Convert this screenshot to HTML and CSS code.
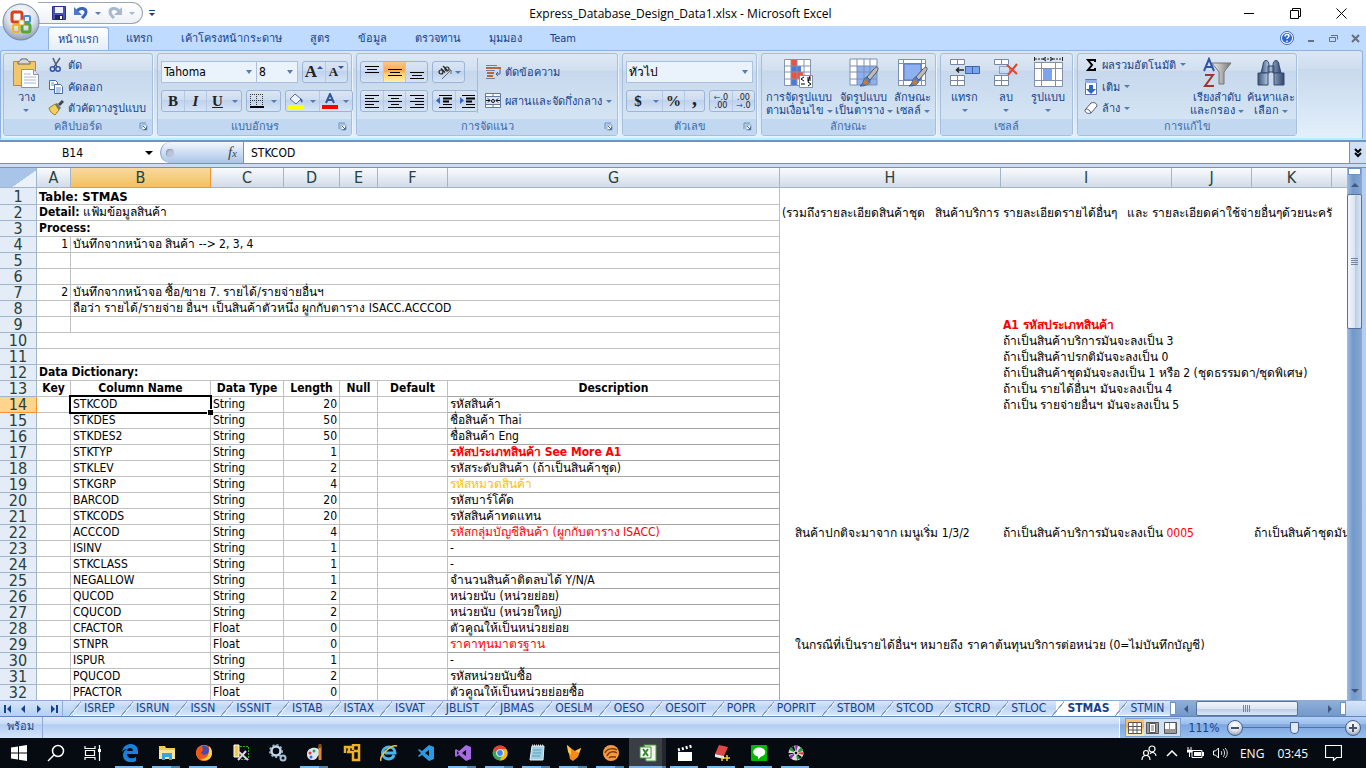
FILE: index.html
```html
<!DOCTYPE html>
<html lang="th">
<head>
    <meta charset="UTF-8">
    <meta name="viewport" content="width=device-width, initial-scale=1.0">
    <title>Express_Database_Design_Data1.xlsx - Microsoft Excel</title>
    <link rel="stylesheet" href="styles.css">
</head>
<body>
    <!-- shared icons -->
    <svg class="defs" width="0" height="0" aria-hidden="true">
        <defs>
            <linearGradient id="steel" x1="0" x2="1"><stop offset="0" stop-color="#3d5478"/><stop offset=".4" stop-color="#b9cce6"/><stop offset="1" stop-color="#2f4569"/></linearGradient>
            <linearGradient id="funnel" x1="0" x2="1"><stop offset="0" stop-color="#eee"/><stop offset="1" stop-color="#777"/></linearGradient>
            <radialGradient id="orb" cx=".5" cy=".3" r=".7"><stop offset="0" stop-color="#fff"/><stop offset=".55" stop-color="#dfe4ec"/><stop offset="1" stop-color="#8e9db5"/></radialGradient>
            <symbol id="launcher" viewBox="0 0 9 9"><path d="M1 7V1h6" fill="none" stroke="#6a8cb8"/><path d="M3 3h5v5H3z" fill="#fff" stroke="#8aa6cb"/><path d="M4 4l3 3M7.500 4.500v3h-3" stroke="#4a6da0" fill="none"/></symbol>
            <symbol id="grid-table" viewBox="0 0 30 30">
                <path d="M1 1h27v26H1z" fill="#fff"/><path d="M8 8h20v19H8z" fill="#8db0f0"/>
                <path d="M1 1h27v26H1zM8 1v26M15 1v26M21 1v26M1 8h27M1 14h27M1 21h27" fill="none" stroke="#7d8fb0"/>
            </symbol>
            <symbol id="brush" viewBox="0 0 20 22">
                <path d="M18 1c2 1 1 3-1 6l-6 7-3-3 6-7c2-2 3-3 4-3z" fill="#bbb" stroke="#555"/>
                <path d="M8 11l3 3c0 4-4 6-10 6 4-2 3-8 7-9z" fill="#5980c4" stroke="#3b5c96"/><path d="M6 13l4 4-3 2-3-2z" fill="#c77b33"/>
            </symbol>
        </defs>
    </svg>

    <header class="title-bar">
        <button class="office-button" aria-label="Office">
            <svg width="38" height="38" viewBox="0 0 38 38">
                <circle cx="19" cy="19" r="18" fill="url(#orb)" stroke="#7287a8"/>
                <rect x="10" y="9" width="10" height="10" rx="2" fill="none" stroke="#d8411b" stroke-width="3"/>
                <rect x="22" y="13" width="6" height="6" rx="1" fill="none" stroke="#3b8ede" stroke-width="2"/>
                <rect x="11" y="22" width="6" height="7" rx="1" fill="none" stroke="#f2b61c" stroke-width="2"/>
                <rect x="20" y="21" width="8" height="8" rx="2" fill="none" stroke="#57a639" stroke-width="3"/>
                <path d="M17 17h5v5h-5z" fill="#fff" stroke="#e8a02a"/>
            </svg>
        </button>
        <div class="quick-access">
            <button aria-label="Save"><svg width="16" height="16" viewBox="0 0 16 16"><path d="M1.500 1.500h13v13h-13z" fill="#4a52b8" stroke="#2b2f86"/><path d="M4 2h8v6H4z" fill="#eef2ff"/><path d="M4 10h8v5H4z" fill="#20245f"/><path d="M9 11h2v3H9z" fill="#fff"/></svg></button>
            <button aria-label="Undo"><svg width="16" height="16" viewBox="0 0 16 16"><path d="M4 6c3-4 9-3 9 1 0 3-2 4-4 6" fill="none" stroke="#3a63b8" stroke-width="3"/><path d="M1 2v8h8z" fill="#4c78cc"/></svg></button>
            <i class="arrow"></i>
            <button aria-label="Redo"><svg width="16" height="16" viewBox="0 0 16 16"><path d="M12 6C9 2 3 3 3 7c0 3 2 4 4 6" fill="none" stroke="#a9b8cf" stroke-width="3"/><path d="M15 2v8H7z" fill="#a9b8cf"/></svg></button>
            <i class="arrow muted"></i>
        </div>
        <button class="customize" aria-label="Customize"><i class="bar"></i><i class="arrow dark"></i></button>
        <h1>Express_Database_Design_Data1.xlsx - Microsoft Excel</h1>
        <div class="window-buttons">
            <button aria-label="Minimize"><svg width="11" height="11"><path d="M0 5.500h10" stroke="#000"/></svg></button>
            <button aria-label="Restore"><svg width="11" height="11"><path d="M.5 2.500h8v8h-8zM2.500 2.500v-2h8v8h-2" fill="none" stroke="#000"/></svg></button>
            <button aria-label="Close"><svg width="11" height="11"><path d="M.5.5l10 10M10.500.5l-10 10" stroke="#000"/></svg></button>
        </div>
    </header>

    <nav class="ribbon-tabs">
        <button class="active">หน้าแรก</button>
        <button>แทรก</button>
        <button>เค้าโครงหน้ากระดาษ</button>
        <button>สูตร</button>
        <button>ข้อมูล</button>
        <button>ตรวจทาน</button>
        <button>มุมมอง</button>
        <button>Team</button>
        <div class="book-buttons">
            <button aria-label="Help"><svg width="14" height="14" viewBox="0 0 14 14"><circle cx="7" cy="7" r="6.500" fill="#fff" stroke="#3464c0"/><circle cx="7" cy="7" r="5" fill="#2f66d0"/><path d="M5 5.500c0-3 4-2.500 4-.5 0 1.500-2 1.500-2 3M7 9.500V11" fill="none" stroke="#fff" stroke-width="1.500"/></svg></button>
            <button aria-label="Minimize workbook"><svg width="9" height="9"><path d="M1 7h6" stroke="#66707e" stroke-width="2"/></svg></button>
            <button aria-label="Restore workbook"><svg width="9" height="9"><path d="M.5 3.500h6v4h-6zM2 1.500h6.500v4" fill="none" stroke="#66707e"/></svg></button>
            <button aria-label="Close workbook"><svg width="9" height="9"><path d="M1 1l7 7M8 1L1 8" stroke="#66707e" stroke-width="2"/></svg></button>
        </div>
    </nav>

    <section class="ribbon">
        <div class="group clipboard">
            <div class="group-body">
                <button class="big">
                    <svg width="28" height="30" viewBox="0 0 28 30"><path d="M1.500 3.500h22v24h-22z" fill="#f3c66b" stroke="#b58a3a"/><path d="M6 4c1-1 3-1 3-3h6c0 2 2 2 3 3v2H6z" fill="#d7d7d7" stroke="#666"/><path d="M9.500 11.500h12l5 5v13h-17z" fill="#fff" stroke="#8a93a8"/><path d="M21.500 11.500v5h5" fill="#dde4f2" stroke="#8a93a8"/><path d="M12 16h7M12 19h12M12 22h12M12 25h12" stroke="#a8b8d8"/></svg>
                    <span>วาง</span><i class="arrow"></i>
                </button>
                <div class="stack">
                    <button class="line"><svg width="16" height="16" viewBox="0 0 16 16"><path d="M5 1l4 9M12 1L6 10" stroke="#555e70" stroke-width="1.500"/><circle cx="4.500" cy="12" r="2.200" fill="none" stroke="#2f55a4" stroke-width="1.500"/><circle cx="10" cy="12" r="2.200" fill="none" stroke="#2f55a4" stroke-width="1.500"/></svg>ตัด</button>
                    <button class="line"><svg width="16" height="16" viewBox="0 0 16 16"><path d="M1.500 1.500h6l2 2v7h-8z" fill="#fff" stroke="#4769ad"/><path d="M6.500 5.500h6l2 2v7h-8z" fill="#fff" stroke="#4769ad"/><path d="M3 4h3M3 6h3M8 9h5M8 11h5M8 13h4" stroke="#6f91d0"/></svg>คัดลอก</button>
                    <button class="line"><svg width="16" height="16" viewBox="0 0 16 16"><path d="M1 8l6-4 4 6-4 5c-2-1-5-3-6-7z" fill="#f2d25c" stroke="#9c7d22"/><path d="M7 4l2-1 4 5-2 2z" fill="#777"/><path d="M11 5l4-4" stroke="#444" stroke-width="3"/></svg>ตัวคัดวางรูปแบบ</button>
                </div>
            </div>
            <div class="group-label">คลิปบอร์ด<svg class="launcher" width="9" height="9"><use href="#launcher"/></svg></div>
        </div>

        <div class="group font">
            <div class="group-body rows">
                <div class="row">
                    <span class="combo family"><select aria-label="Font"><option>Tahoma</option></select></span><span class="combo size"><select aria-label="Font size"><option>8</option></select></span>
                    <span class="box push">
                        <button class="w22" aria-label="Grow font"><span class="serif big-a">A</span><i class="tip up"></i></button>
                        <button class="w22" aria-label="Shrink font"><span class="serif small-a">A</span><i class="tip"></i></button>
                    </span>
                </div>
                <div class="row spread">
                    <span class="box"><button class="w22 serif"><b>B</b></button><button class="w22 serif"><b><i>I</i></b></button><button class="w22 serif"><b><u>U</u></b></button><button class="drop" aria-label="Underline style"><i class="arrow"></i></button></span>
                    <span class="box"><button class="w20" aria-label="Borders"><svg width="14" height="14"><path d="M.5 0v12M6.500 0v12M12.500 0v12M0 .5h13M0 6.500h13" stroke="#333" stroke-dasharray="1 1"/><path d="M0 13h14" stroke="#000" stroke-width="2"/></svg></button><button class="drop" aria-label="Border style"><i class="arrow"></i></button></span>
                    <span class="box">
                        <button class="w20" aria-label="Fill color"><svg width="16" height="16"><path d="M2 6l5-5 6 5-5 5z" fill="#eef2fa" stroke="#5a6c90"/><path d="M12 5c3 1 3 3 2 5l-2-3z" fill="#3b62ad"/><path d="M0 12h16v4H0z" fill="#ff0"/></svg></button><button class="drop" aria-label="Fill colors"><i class="arrow"></i></button>
                        <button class="w20" aria-label="Font color"><svg width="16" height="16"><path d="M4 10L8 1l4 9M5 7h6" fill="none" stroke="#33539b" stroke-width="2"/><path d="M0 12h16v4H0z" fill="#f00"/></svg></button><button class="drop" aria-label="Font colors"><i class="arrow"></i></button>
                    </span>
                </div>
            </div>
            <div class="group-label">แบบอักษร<svg class="launcher" width="9" height="9"><use href="#launcher"/></svg></div>
        </div>

        <div class="group align">
            <div class="group-body">
                <div class="rows divided">
                    <div class="row">
                        <span class="box">
                            <button class="w22" aria-label="Top"><svg width="14" height="14"><path d="M0 1.500h14M2 4.500h10M0 7.500h14" stroke="#000"/></svg></button>
                            <button class="w22 on" aria-label="Middle"><svg width="14" height="14"><path d="M0 4.500h14M2 7.500h10M0 10.500h14" stroke="#000"/></svg></button>
                            <button class="w22" aria-label="Bottom"><svg width="14" height="14"><path d="M0 7.500h14M2 10.500h10M0 13.500h14" stroke="#000"/></svg></button>
                        </span>
                        <span class="box"><button class="orient" aria-label="Orientation"><svg width="16" height="16"><g fill="none" stroke="#222" stroke-width="1.200"><circle cx="4" cy="8" r="2"/><path d="M4 4.500l4 4M6 2l5 5"/><circle cx="10" cy="5" r="2"/></g><path d="M5 15l9-9M14 10V6h-4" fill="none" stroke="#667"/></svg><i class="arrow"></i></button></span>
                    </div>
                    <div class="row">
                        <span class="box">
                            <button class="w22" aria-label="Left"><svg width="14" height="14"><path d="M0 1.500h14M0 4.500h9M0 7.500h14M0 10.500h9M0 13.500h14" stroke="#000"/></svg></button>
                            <button class="w22" aria-label="Center"><svg width="14" height="14"><path d="M0 1.500h14M3 4.500h8M0 7.500h14M3 10.500h8M0 13.500h14" stroke="#000"/></svg></button>
                            <button class="w22" aria-label="Right"><svg width="14" height="14"><path d="M0 1.500h14M5 4.500h9M0 7.500h14M5 10.500h9M0 13.500h14" stroke="#000"/></svg></button>
                        </span>
                        <span class="box">
                            <button class="w22" aria-label="Decrease indent"><svg width="16" height="14"><path d="M3 1.500h13M7 4.500h9M7 7.500h6M7 10.500h9M3 13.500h13" stroke="#000"/><path d="M7 4.500h9M7 7.500h6" stroke="#000" stroke-width="2"/><path d="M4 3v7L0 6.500z" fill="#3566c4"/></svg></button>
                            <button class="w22" aria-label="Increase indent"><svg width="16" height="14"><path d="M3 1.500h13M7 4.500h9M7 7.500h6M7 10.500h9M3 13.500h13" stroke="#000"/><path d="M7 4.500h9M7 7.500h6" stroke="#000" stroke-width="2"/><path d="M1 3v7l4-3.500z" fill="#3566c4"/></svg></button>
                        </span>
                    </div>
                </div>
                <div class="rows">
                    <button class="line"><svg width="16" height="16"><path d="M1 1.500h11M1 14.500h9M1 6.500h9" stroke="#6d7fa3"/><path d="M1 4h15M2 9h7M2 12h6" stroke="#b06a3b" stroke-width="2"/><path d="M15 5v5h-3M13 8l-2 2 2 2" fill="none" stroke="#3f5f9c"/></svg>ตัดข้อความ</button>
                    <button class="line"><svg width="16" height="16"><path d="M.5.5h15v14H.5zM8 .5v3M8 11v3.500M.5 3.500h15M.5 11.500h15" fill="#fff" stroke="#63779f"/><path d="M1 4h14v7H1z" fill="#d8e4f6"/><path d="M1 7.500h4M15 7.500h-4M3 5.500l2 2-2 2M13 5.500l-2 2 2 2" stroke="#111" fill="none"/><circle cx="8" cy="8" r="1.500" fill="none" stroke="#111"/></svg>ผสานและจัดกึ่งกลาง<i class="arrow"></i></button>
                </div>
            </div>
            <div class="group-label">การจัดแนว<svg class="launcher" width="9" height="9"><use href="#launcher"/></svg></div>
        </div>

        <div class="group number">
            <div class="group-body rows">
                <div class="row"><span class="combo wide"><select aria-label="Number format"><option>ทั่วไป</option></select></span></div>
                <div class="row spread">
                    <span class="box"><button class="w22 serif"><b>$</b></button><button class="drop" aria-label="Currency"><i class="arrow"></i></button><button class="w22 serif"><b>%</b></button><button class="w20 serif comma"><b>,</b></button></span>
                    <span class="box">
                        <button class="w22 decimals"><span><i class="blue">←</i>.0</span><span>.00</span></button>
                        <button class="w22 decimals"><span>.00</span><span><i class="blue">→</i>.0</span></button>
                    </span>
                </div>
            </div>
            <div class="group-label">ตัวเลข<svg class="launcher" width="9" height="9"><use href="#launcher"/></svg></div>
        </div>

        <div class="group styles">
            <div class="group-body">
                <button class="big">
                    <svg width="32" height="32" viewBox="0 0 32 32"><path d="M1 2h26v27H1z" fill="#fff"/><path d="M8 2h6v7H8zM8 15h12v7H8z" fill="#f0513a"/><path d="M8 9h10v6H8zM8 22h6v7H8z" fill="#4a7bdc"/><path d="M1.500 2.500h26v26h-26zM8 2v27M14 2v27M21 2v27M1 9h27M1 15h27M1 22h27" fill="none" stroke="#8693ad"/><path d="M16.500 18.500h13v12h-13z" fill="#fff" stroke="#8090a8"/><path d="M21 20l-3 2 3 2M18 27h4M24 21h4M24 23h4M27 19l-2 6M25 25l3 2-3 2" fill="none" stroke="#000"/></svg>
                    <span>การจัดรูปแบบ<br>ตามเงื่อนไข <i class="arrow"></i></span>
                </button>
                <button class="big">
                    <svg width="32" height="32" viewBox="0 0 32 32"><use href="#grid-table" x="1" y="1" width="30" height="30"/><use href="#brush" x="11" y="9" width="20" height="22"/></svg>
                    <span>จัดรูปแบบ<br>เป็นตาราง <i class="arrow"></i></span>
                </button>
                <button class="big">
                    <svg width="32" height="32" viewBox="0 0 32 32"><path d="M1.500 2.500h27v26h-27z" fill="#fff" stroke="#7d8fb0"/><path d="M6.500 2v27M24.500 2v27M1 6.500h27M1 23.500h27" stroke="#7d8fb0"/><path d="M7 7h17v16H7z" fill="#8db0f0" stroke="#5277c4"/><use href="#brush" x="11" y="9" width="20" height="22"/></svg>
                    <span>ลักษณะ<br>เซลล์ <i class="arrow"></i></span>
                </button>
            </div>
            <div class="group-label">ลักษณะ</div>
        </div>

        <div class="group cells">
            <div class="group-body">
                <button class="big">
                    <svg width="32" height="32" viewBox="0 0 32 32"><path d="M1.500 2.500h14v5h-14zM8.500 2.500v5M1.500 18.500h14v10h-14zM8.500 18.500v10M1.500 23.500h14" fill="#fff" stroke="#7886a0"/><path d="M16.500 9.500h14v7h-14z" fill="#7da5ee" stroke="#3f62ad"/><path d="M23.500 9.500v7" stroke="#3f62ad"/><path d="M15 13H8M10 10.500L7.500 13l2.500 2.500" fill="none" stroke="#222" stroke-width="1.500"/></svg>
                    <span>แทรก</span><i class="arrow"></i>
                </button>
                <button class="big">
                    <svg width="32" height="32" viewBox="0 0 32 32"><path d="M4.500 2.500h14v5h-14zM11.500 2.500v5M4.500 18.500h14v10h-14zM11.500 18.500v10M4.500 23.500h14" fill="#fff" stroke="#7886a0"/><path d="M9.500 9.500h10v7h-10z" fill="none" stroke="#3f62ad" stroke-dasharray="1 1"/><path d="M17 8l10 9M27 7l-9 11" stroke="#e8432a" stroke-width="2"/></svg>
                    <span>ลบ</span><i class="arrow"></i>
                </button>
                <button class="big">
                    <svg width="32" height="32" viewBox="0 0 32 32"><path d="M2.500 5.500h28v24h-28zM9.500 5v24M23.500 5v24M2 11.500h28M2 23.500h28" fill="#fff" stroke="#8290aa"/><path d="M11 12h9v11h-9z" fill="#7da5ee"/><path d="M3 2h27" stroke="#222" stroke-dasharray="2 1"/><path d="M2.500 0v4M30.500 0v4M14 0l-3 2 3 2M18 0l3 2-3 2" fill="none" stroke="#222"/></svg>
                    <span>รูปแบบ</span><i class="arrow"></i>
                </button>
            </div>
            <div class="group-label">เซลล์</div>
        </div>

        <div class="group editing">
            <div class="group-body">
                <div class="stack">
                    <button class="line"><svg width="14" height="14"><path d="M11 4V2H4l4 5-4 5h7v-2" fill="none" stroke="#000" stroke-width="2"/></svg>ผลรวมอัตโนมัติ<i class="arrow"></i></button>
                    <button class="line"><svg width="14" height="16"><path d="M1.500.5h11v15h-11z" fill="#fff" stroke="#5b76ad"/><path d="M1 1h12v3H1z" fill="#8fb0e8"/><path d="M5 6h4v4h3l-5 5-5-5h3z" fill="#2f63c8"/></svg>เติม<i class="arrow"></i></button>
                    <button class="line"><svg width="14" height="14"><path d="M1 9l6-7c3-1 6 0 6 3l-6 7c-3 1-6 0-6-3z" fill="#fff" stroke="#555f75"/><path d="M2 8c2 0 4 1 5 4" fill="none" stroke="#555f75"/></svg>ล้าง<i class="arrow"></i></button>
                </div>
                <button class="big">
                    <svg width="32" height="32" viewBox="0 0 32 32"><path d="M11 6h19l-7 9v12h-5V15z" fill="url(#funnel)" stroke="#777"/><path d="M3 14L8 2l5 12M5 10h6" fill="none" stroke="#2f55a8" stroke-width="2"/><path d="M4 18h8L4 29h9" fill="none" stroke="#a3332d" stroke-width="2"/></svg>
                    <span>เรียงลำดับ<br>และกรอง <i class="arrow"></i></span>
                </button>
                <button class="big">
                    <svg width="32" height="32" viewBox="0 0 32 32"><path d="M8 8c0-6 6-6 6 0v8H6zM18 8c0-6 6-6 6 0l2 8h-8zM13 9h6v6h-6z" fill="url(#steel)" stroke="#33496d"/><path d="M3 16h10v12H3zM19 16h10v12H19z" fill="url(#steel)" stroke="#33496d"/></svg>
                    <span>ค้นหาและ<br>เลือก <i class="arrow"></i></span>
                </button>
            </div>
            <div class="group-label">การแก้ไข</div>
        </div>
    </section>

    <section class="formula-bar">
        <div class="name-box"><input type="text" value="B14" aria-label="Name box"><i class="arrow black"></i></div>
        <div class="fx"><i class="knob"></i><span>f<small>x</small></span></div>
        <input class="formula" type="text" value="STKCOD" aria-label="Formula">
        <button class="expand" aria-label="Expand"><svg width="9" height="10"><path d="M1 1l3 3 3-3M1 5l3 3 3-3" fill="none" stroke="#000" stroke-width="2"/></svg></button>
    </section>

    <main class="workbook">
        <div class="sheet">
            <table>
                <colgroup><col class="c-head"><col class="c-a"><col class="c-b"><col class="c-c"><col class="c-d"><col class="c-e"><col class="c-f"><col class="c-g"><col class="c-h"><col class="c-i"><col class="c-jk"><col class="c-jk"><col class="c-jk"></colgroup>
                <thead>
                    <tr><th class="corner"></th><th>A</th><th class="selected">B</th><th>C</th><th>D</th><th>E</th><th>F</th><th>G</th><th>H</th><th>I</th><th>J</th><th>K</th><th></th></tr>
                </thead>
                <tbody class="notes">
                    <tr class="first"><th>1</th><td colspan="7"><b>Table: STMAS</b></td></tr>
                    <tr><th>2</th><td colspan="7"><b>Detail:</b> แฟ้มข้อมูลสินค้า</td><td class="free">(รวมถึงรายละเอียดสินค้าชุด &nbsp; สินค้าบริการ รายละเอียดรายได้อื่นๆ &nbsp; และ รายละเอียดค่าใช้จ่ายอื่นๆด้วยนะครั</td></tr>
                    <tr><th>3</th><td colspan="7"><b>Process:</b></td></tr>
                    <tr><th>4</th><td class="num">1</td><td colspan="6">บันทึกจากหน้าจอ สินค้า --&gt; 2, 3, 4</td></tr>
                    <tr><th>5</th><td></td><td colspan="6"></td></tr>
                    <tr><th>6</th><td></td><td colspan="6"></td></tr>
                    <tr><th>7</th><td class="num">2</td><td colspan="6">บันทึกจากหน้าจอ ซื้อ/ขาย 7. รายได้/รายจ่ายอื่นฯ</td></tr>
                    <tr><th>8</th><td></td><td colspan="6">ถือว่า รายได้/รายจ่าย อื่นฯ เป็นสินค้าตัวหนึ่ง ผูกกับตาราง ISACC.ACCCOD</td></tr>
                    <tr><th>9</th><td></td><td colspan="6"></td><td class="free"></td><td class="free red"><b>A1 รหัสประเภทสินค้า</b></td></tr>
                    <tr><th>10</th><td colspan="7"></td><td class="free"></td><td class="free">ถ้าเป็นสินค้าบริการมันจะลงเป็น 3</td></tr>
                    <tr><th>11</th><td colspan="7"></td><td class="free"></td><td class="free">ถ้าเป็นสินค้าปรกติมันจะลงเป็น 0</td></tr>
                    <tr><th>12</th><td colspan="7"><b>Data Dictionary:</b></td><td class="free"></td><td class="free">ถ้าเป็นสินค้าชุดมันจะลงเป็น 1 หรือ 2 (ชุดธรรมดา/ชุดพิเศษ)</td></tr>
                </tbody>
                <tbody class="dictionary">
                    <tr class="titles"><th>13</th><td>Key</td><td>Column Name</td><td>Data Type</td><td>Length</td><td>Null</td><td>Default</td><td>Description</td><td class="free"></td><td class="free">ถ้าเป็น รายได้อื่นฯ มันจะลงเป็น 4</td></tr>
                    <tr><th class="selected">14</th><td></td><td class="current">STKCOD</td><td>String</td><td>20</td><td></td><td></td><td>รหัสสินค้า</td><td class="free"></td><td class="free">ถ้าเป็น รายจ่ายอื่นฯ มันจะลงเป็น 5</td></tr>
                    <tr><th>15</th><td></td><td>STKDES</td><td>String</td><td>50</td><td></td><td></td><td>ชื่อสินค้า Thai</td></tr>
                    <tr><th>16</th><td></td><td>STKDES2</td><td>String</td><td>50</td><td></td><td></td><td>ชื่อสินค้า Eng</td></tr>
                    <tr><th>17</th><td></td><td>STKTYP</td><td>String</td><td>1</td><td></td><td></td><td class="red"><b>รหัสประเภทสินค้า See More A1</b></td></tr>
                    <tr><th>18</th><td></td><td>STKLEV</td><td>String</td><td>2</td><td></td><td></td><td>รหัสระดับสินค้า (ถ้าเป็นสินค้าชุด)</td></tr>
                    <tr><th>19</th><td></td><td>STKGRP</td><td>String</td><td>4</td><td></td><td></td><td class="gold">รหัสหมวดสินค้า</td></tr>
                    <tr><th>20</th><td></td><td>BARCOD</td><td>String</td><td>20</td><td></td><td></td><td>รหัสบาร์โค๊ด</td></tr>
                    <tr><th>21</th><td></td><td>STKCODS</td><td>String</td><td>20</td><td></td><td></td><td>รหัสสินค้าทดแทน</td></tr>
                    <tr><th>22</th><td></td><td>ACCCOD</td><td>String</td><td>4</td><td></td><td></td><td class="red">รหัสกลุ่มบัญชีสินค้า (ผูกกับตาราง ISACC)</td><td class="free indent">สินค้าปกติจะมาจาก เมนูเริ่ม 1/3/2</td><td class="free">ถ้าเป็นสินค้าบริการมันจะลงเป็น <span class="red">0005</span></td><td class="free"></td><td class="free">ถ้าเป็นสินค้าชุดมันจะลงเป็น</td></tr>
                    <tr><th>23</th><td></td><td>ISINV</td><td>String</td><td>1</td><td></td><td></td><td>-</td></tr>
                    <tr><th>24</th><td></td><td>STKCLASS</td><td>String</td><td>1</td><td></td><td></td><td>-</td></tr>
                    <tr><th>25</th><td></td><td>NEGALLOW</td><td>String</td><td>1</td><td></td><td></td><td>จำนวนสินค้าติดลบได้ Y/N/A</td></tr>
                    <tr><th>26</th><td></td><td>QUCOD</td><td>String</td><td>2</td><td></td><td></td><td>หน่วยนับ (หน่วยย่อย)</td></tr>
                    <tr><th>27</th><td></td><td>CQUCOD</td><td>String</td><td>2</td><td></td><td></td><td>หน่วยนับ (หน่วยใหญ่)</td></tr>
                    <tr><th>28</th><td></td><td>CFACTOR</td><td>Float</td><td>0</td><td></td><td></td><td>ตัวคูณให้เป็นหน่วยย่อย</td></tr>
                    <tr><th>29</th><td></td><td>STNPR</td><td>Float</td><td>0</td><td></td><td></td><td class="red">ราคาทุนมาตรฐาน</td><td class="free indent">ในกรณีที่เป็นรายได้อื่นฯ หมายถึง ราคาต้นทุนบริการต่อหน่วย (0=ไม่บันทึกบัญชี)</td></tr>
                    <tr><th>30</th><td></td><td>ISPUR</td><td>String</td><td>1</td><td></td><td></td><td>-</td></tr>
                    <tr><th>31</th><td></td><td>PQUCOD</td><td>String</td><td>2</td><td></td><td></td><td>รหัสหน่วยนับซื้อ</td></tr>
                    <tr><th>32</th><td></td><td>PFACTOR</td><td>Float</td><td>0</td><td></td><td></td><td>ตัวคูณให้เป็นหน่วยย่อยซื้อ</td></tr>
                </tbody>
            </table>
        </div>
        <div class="v-scroll">
            <i class="split"></i>
            <button aria-label="Scroll up"><i class="tri-up"></i></button>
            <div class="thumb"><i class="grip"></i></div>
            <div class="track"></div>
            <button aria-label="Scroll down"><i class="tri-down"></i></button>
        </div>
    </main>

    <section class="sheet-bar">
        <div class="sheet-nav">
            <button aria-label="First"><svg width="8" height="8"><path d="M1 0v8" stroke="#15428b" stroke-width="2"/><path d="M7 0v8L3 4z" fill="#15428b"/></svg></button>
            <button aria-label="Previous"><svg width="8" height="8"><path d="M6 0v8L2 4z" fill="#15428b"/></svg></button>
            <button aria-label="Next"><svg width="8" height="8"><path d="M2 0v8l4-4z" fill="#15428b"/></svg></button>
            <button aria-label="Last"><svg width="8" height="8"><path d="M7 0v8" stroke="#15428b" stroke-width="2"/><path d="M1 0v8l4-4z" fill="#15428b"/></svg></button>
        </div>
        <div class="sheet-tabs">
            <button>ISREP</button><button>ISRUN</button><button>ISSN</button><button>ISSNIT</button><button>ISTAB</button><button>ISTAX</button><button>ISVAT</button><button>JBLIST</button><button>JBMAS</button><button>OESLM</button><button>OESO</button><button>OESOIT</button><button>POPR</button><button>POPRIT</button><button>STBOM</button><button>STCOD</button><button>STCRD</button><button>STLOC</button><button class="active">STMAS</button><button>STMIN</button>
        </div>
        <div class="h-scroll">
            <i class="split"></i>
            <button aria-label="Scroll left"><i class="tri-left"></i></button>
            <div class="thumb"><i class="grip"></i></div>
            <div class="track"></div>
            <button aria-label="Scroll right"><i class="tri-right"></i></button>
            <i class="split"></i>
        </div>
    </section>

    <footer class="status-bar">
        <span class="state">พร้อม</span>
        <div class="view-tools">
            <div class="views">
                <button class="on" aria-label="Normal"><svg width="14" height="12"><path d="M.5.5h13v11H.5zM5 0v12M9 0v12M0 4.500h14M0 8h14" fill="#fff" stroke="#555"/></svg></button>
                <button aria-label="Page layout"><svg width="14" height="12"><path d="M.5.5h12v11H.5z" fill="#999" stroke="#555"/><path d="M3.500 1.500h6v9h-6z" fill="#fff" stroke="#555"/><path d="M5 4h3M5 6h3M5 8h3" stroke="#777"/></svg></button>
                <button aria-label="Page break"><svg width="14" height="12"><path d="M.5.5h12v11H.5z" fill="#999" stroke="#555"/><path d="M1 1h4v6H1zM6 1h5v6H6z" fill="#fff"/></svg></button>
            </div>
            <span class="percent">111%</span>
            <button class="zoom" aria-label="Zoom out"><svg width="16" height="16"><circle cx="8" cy="8" r="7.500" fill="url(#orb)" stroke="#45618f"/><path d="M4 8h8" stroke="#44546e" stroke-width="2"/></svg></button>
            <input type="range" min="0" max="100" value="50" aria-label="Zoom">
            <button class="zoom" aria-label="Zoom in"><svg width="16" height="16"><circle cx="8" cy="8" r="7.500" fill="url(#orb)" stroke="#45618f"/><path d="M4 8h8M8 4v8" stroke="#44546e" stroke-width="2"/></svg></button>
        </div>
    </footer>

    <div class="taskbar">
        <button aria-label="Start"><svg width="16" height="16"><path d="M0 2.500l7-1v6H0zM8 1.300L16 0v7.500H8zM0 8.500h7v6l-7-1zM8 8.500h8V16l-8-1.200z" fill="#fff"/></svg></button>
        <button aria-label="Search"><svg width="18" height="18"><circle cx="11" cy="7" r="5.500" fill="none" stroke="#fff" stroke-width="1.500"/><path d="M7 11l-6 6" stroke="#fff" stroke-width="1.500"/></svg></button>
        <button aria-label="Task view"><svg width="18" height="16"><path d="M1 1v2.500h10V1M1 15v-2.500h10V15M1.500 5.500h9v5h-9zM15.500 0v16" fill="none" stroke="#fff" stroke-width="1.200"/><path d="M14 4h3v3h-3z" fill="#fff"/></svg></button>
        <button class="open" aria-label="Edge"><svg width="18" height="18"><path d="M1 8C2 2 6 0 10 0c5 0 7 4 7 7v3H6c0 5 6 5 9 3v4c-5 3-13 1-13-6 0-3 2-5 4-6-2 0-4 1-5 3zM6 7h6c0-4-6-4-6 0z" fill="#1b80dd" fill-rule="evenodd"/></svg></button>
        <button class="open many" aria-label="File Explorer"><svg width="18" height="16"><path d="M1 1h6l1 2h9v11H1z" fill="#f7c852"/><path d="M1 5h16v9H1z" fill="#ffe394"/><path d="M4 15V8h10v7h-3v-3H7v3z" fill="#35a4e0"/></svg></button>
        <button class="open" aria-label="Firefox"><svg width="18" height="18"><circle cx="9" cy="9" r="8" fill="#ff9a1f"/><path d="M2 5c3-4 8-5 12-2 4 4 3 9 0 12-3 2-8 2-11-1-2-3-2-6-1-9z" fill="#f2541c"/><path d="M7 2c4-1 8 2 7 6-1 3-6 4-8 1l2-3z" fill="#3a50b8"/><path d="M14 2c4 4 4 10 0 13-4 2-7 1-8 0 5 0 9-3 8-13z" fill="#ffd23c"/></svg></button>
        <button aria-label="SQL tools"><svg width="18" height="18"><path d="M2 1h5v12H2z" fill="#ecc84d" stroke="#fff"/><path d="M8 2.500h8.500v13H5" fill="none" stroke="#2fae2f" stroke-dasharray="2 1"/><path d="M6 16l8-9M7 8l9 8" stroke="#d5d9df" stroke-width="2"/></svg></button>
        <button aria-label="Services"><svg width="18" height="18"><circle cx="7" cy="7" r="4.500" fill="none" stroke="#c9d8e6" stroke-width="2.500"/><circle cx="7" cy="7" r="6" fill="none" stroke="#9db3c8" stroke-width="2" stroke-dasharray="2 2"/><circle cx="14" cy="14" r="2.500" fill="none" stroke="#a9c0d4" stroke-width="2"/></svg></button>
        <button class="open many" aria-label="Paint"><svg width="18" height="18"><path d="M1 10c0-5 5-7 9-6 5 1 5 5 3 7-2 1-2 5-6 5s-6-2-6-6z" fill="#d9e8f2"/><circle cx="4" cy="9" r="1.500" fill="#e33"/><circle cx="8" cy="7" r="1.500" fill="#2a4"/><circle cx="5" cy="13" r="1.500" fill="#36d"/><path d="M14 2v14" stroke="#e08a2d" stroke-width="3"/><path d="M14 0v4" stroke="#8a4a1c" stroke-width="3"/></svg></button>
        <button aria-label="VMware"><svg width="18" height="18"><path d="M2 9V3h8M6 3v5M10 6V1h6v6h-5M16 8v8h-6v-5M4 8h6v4" fill="none" stroke="#f2b01d" stroke-width="2.500"/></svg></button>
        <button aria-label="Internet Explorer"><svg width="18" height="18"><path d="M14 11c-1 3-4 4-6 4-8-1-7-12 1-12 4 0 6 3 6 6H5" fill="none" stroke="#48b5ef" stroke-width="3"/><path d="M1 17C-1 12 11 0 17 2" fill="none" stroke="#f2c335" stroke-width="1.500"/></svg></button>
        <button aria-label="VS Code"><svg width="18" height="18"><path d="M12 1l5 2v12l-5 2L5 11l-3 2-1-1 3-3-3-3 1-1 3 2zM12 6L8 9l4 3z" fill="#2a9be3" fill-rule="evenodd"/></svg></button>
        <button class="open many" aria-label="Visual Studio"><svg width="18" height="18"><path d="M12 1l5 2v12l-5 2L5 11l-3 2-1-1V6l1-1 3 2zM12 6L8 9l4 3zM3 7v4l2-2z" fill="#a56be0" fill-rule="evenodd"/></svg></button>
        <button class="open many" aria-label="Chrome"><svg width="16" height="16"><circle cx="8" cy="8" r="7.500" fill="#3aa757"/><path d="M1.500 4.200A7.500 7.500 0 0 1 14.500 4.200H8a4 4 0 0 0-4 4z" fill="#e94235"/><path d="M14.500 4.200A7.500 7.500 0 0 1 7.500 15.500L11.500 9 9 4.200z" fill="#fbbc05"/><circle cx="8" cy="8" r="3.800" fill="#fff"/><circle cx="8" cy="8" r="2.900" fill="#4285f4"/></svg></button>
        <button class="open many" aria-label="Notepad"><svg width="18" height="18"><path d="M4 2h12l-1 14H2z" fill="#9dd0e4" stroke="#e8f4f8"/><path d="M4 1.500h12" stroke="#ddd" stroke-width="2" stroke-dasharray="1 1"/><path d="M5 6h8M5 9h8M4 12h8" stroke="#5c9db8"/></svg></button>
        <button class="open many" aria-label="FoxPro"><svg width="18" height="18"><path d="M2 1l5 4 3 2 6-3-1 3-2 6-5 4-3-2z" fill="#f58a1b"/><path d="M2 1l4 4v6l-3-3zM16 4l-2 5-4-2z" fill="#ffc942"/></svg></button>
        <button class="open many" aria-label="Database"><svg width="18" height="18"><circle cx="9" cy="9" r="8" fill="#f79a3e"/><path d="M3 9c2-5 9-5 12-3M5 12c2-5 7-5 10-3M7 14c2-2 5-1 7-1" fill="none" stroke="#7a3a10" stroke-width="1.500"/></svg></button>
        <button class="open many front" aria-label="Excel"><svg width="18" height="18"><path d="M5 1h12v16H7z" fill="#eef6ea" stroke="#4d9a3e"/><path d="M1 3h11v11H1z" fill="#fff" stroke="#3c8d2f"/><path d="M4 5l5 7M9 5l-5 7" stroke="#2f8a2a" stroke-width="2"/></svg></button>
        <button class="open" aria-label="Movies"><svg width="18" height="18"><path d="M2 8h14v9H2z" fill="#fff"/><path d="M2 6l14-4" stroke="#fff" stroke-width="3" stroke-dasharray="2 2"/></svg></button>
        <button class="open" aria-label="Books"><svg width="18" height="18"><path d="M6 1l9 2-4 9-9-2z" fill="#e04848"/><path d="M2 10l9 2v3l-9-2z" fill="#eee"/><path d="M14 11v6M11 14h6M9 13v4" stroke="#f4d13c" stroke-width="1.500"/></svg></button>
        <button class="open" aria-label="LINE"><svg width="16" height="16"><rect width="16" height="16" rx="1" fill="#00b900"/><path d="M8 2.500c8 0 8 8 2 9l-3 3v-3c-7-1-6-9 1-9z" fill="#fff"/></svg></button>
        <button class="open" aria-label="Disc"><svg width="16" height="16"><circle cx="8" cy="8" r="7.500" fill="#d9d9d9"/><path d="M8 8L1 5l2-3zM8 8l5-6 2 4zM8 8l1 7 4-2z" fill="#18a03c"/><path d="M8 8L7 0h3zM8 8l-5 6-2-3z" fill="#8a2bb0"/><path d="M8 8l8-1v3z" fill="#e33"/><path d="M8 8l4 6 2-2zM8 8L3 2l3-1zM8 8l-8 0v2z" fill="#111"/><circle cx="8" cy="8" r="2" fill="#111" stroke="#fff"/></svg></button>
        <div class="tray">
            <button aria-label="People"><svg width="16" height="16"><g fill="none" stroke="#fff" stroke-width="1.200"><circle cx="11" cy="4" r="3"/><circle cx="5" cy="8" r="2.500"/><path d="M1 15c0-6 8-6 8 0M9 9c2-3 6-1 6 2"/></g></svg></button>
            <button aria-label="Hidden icons"><svg width="12" height="8"><path d="M1 7l5-5 5 5" fill="none" stroke="#fff" stroke-width="1.500"/></svg></button>
            <button aria-label="Battery"><svg width="17" height="12"><path d="M5 3.500h10v7H5z" fill="none" stroke="#fff"/><path d="M7 5h7v4H7zM15 5h2v4h-2z" fill="#fff"/><path d="M1 0v2M4 0v2M0 3h5v2H0zM2.500 5v5" stroke="#fff" fill="#fff"/></svg></button>
            <button aria-label="Volume"><svg width="16" height="12"><path d="M.5 4h2l3-3v10l-3-3h-2z" fill="none" stroke="#fff"/><path d="M8 4c1 1 1 3 0 4M10 2c2 2 2 6 0 8M12 1c3 3 3 7 0 10" fill="none" stroke="#ddd"/></svg></button>
            <span class="lang">ENG</span>
            <time>03:45</time>
            <button aria-label="Notifications"><svg width="17" height="16"><path d="M.5.5h16v12h-5l-3 3v-3h-8z" fill="none" stroke="#fff" stroke-width="1.200"/></svg></button>
        </div>
    </div>
</body>
</html>
```
FILE: styles.css
```css
* {
    box-sizing: border-box;
}

body {
    margin: 0;
    height: 100vh;
    display: flex;
    flex-direction: column;
    overflow: hidden;
    background: #bfdbff;
    font-family: "DejaVu Sans Condensed", "DejaVu Sans", "Noto Sans", sans-serif;
    font-size: 12px;
    color: #000;
}

button, input, select {
    font: inherit;
    color: inherit;
    border: 0;
    padding: 0;
    margin: 0;
    background: none;
}

button {
    display: flex;
    align-items: center;
    justify-content: center;
    white-space: nowrap;
}

svg {
    display: block;
    flex: none;
}

.defs {
    position: absolute;
}

/* small triangles */
.arrow {
    display: inline-block;
    flex: none;
    border: 3px solid transparent;
    border-top-color: #567db1;
    border-bottom: 0;
    vertical-align: middle;
}

.arrow.muted {
    border-top-color: #a9b8cf;
}

.arrow.dark {
    border-top-color: #15428b;
}

.arrow.black {
    border-width: 4px 4px 0;
    border-top-color: #000;
}

/* title bar */
.title-bar {
    position: relative;
    flex: none;
    height: 26px;
    display: flex;
    align-items: center;
    background: #fff;
}

.office-button {
    position: absolute;
    left: 2px;
    top: 3px;
    z-index: 2;
}

.quick-access {
    display: flex;
    align-items: center;
    gap: 6px;
    height: 22px;
    margin-left: 38px;
    padding: 0 7px 0 13px;
    border: 1px solid #9aa4b3;
    border-left: 0;
    border-radius: 0 11px 11px 0;
    background: linear-gradient(#fff, #eef1f5);
}

.customize {
    flex-direction: column;
    gap: 2px;
    margin-left: 6px;
}

.customize .bar {
    width: 6px;
    height: 1px;
    background: #15428b;
}

.title-bar h1 {
    flex: 1;
    margin: 0;
    padding-right: 20px;
    text-align: center;
    font: 12px "Open Sans", "Noto Sans", sans-serif;
}

.window-buttons {
    display: flex;
    padding-right: 2px;
}

.window-buttons button {
    width: 46px;
    height: 26px;
}

/* ribbon */
.ribbon-tabs {
    flex: none;
    display: flex;
    height: 24px;
    padding-left: 48px;
    font-size: 11px;
    color: #15428b;
}

.ribbon-tabs > button {
    padding: 0 14px;
}

.ribbon-tabs > .active {
    padding: 0 9px;
    margin: 1px 3px 0 0;
    border: 1px solid #8db2e3;
    border-bottom: 0;
    border-radius: 3px 3px 0 0;
    background: linear-gradient(#fff, #e3edf9);
}

.ribbon-tabs .book-buttons {
    display: flex;
    gap: 13px;
    margin-left: auto;
    padding-right: 6px;
}

.ribbon {
    flex: none;
    display: flex;
    gap: 4px;
    height: 90px;
    margin: 0 3px 0 0;
    padding: 2px;
    border: 1px solid #8db2e3;
    border-bottom: 2px solid #b5f1fc;
    border-radius: 3px;
    background: linear-gradient(#dbe6f4, #cfdded 20%, #c8d9ed 21%, #e3f0fb);
    color: #15428b;
}

.group {
    flex: none;
    display: flex;
    flex-direction: column;
    border: 1px solid #a5bfdd;
    border-radius: 3px;
    box-shadow: 1px 1px 0 #eaf3fc;
    background: linear-gradient(#dee8f5, #d1dfef 20%, #c7d8ed 21%, #d8e8f5);
    font-size: 11px;
}

.group-body {
    flex: 1;
    display: flex;
    min-height: 0;
    padding: 0 3px;
}

.group-label {
    position: relative;
    flex: none;
    height: 16px;
    line-height: 15px;
    text-align: center;
    background: #c1d8f0;
    color: #3e6aaa;
}

.launcher {
    position: absolute;
    right: 4px;
    top: 3px;
}

.clipboard { width: 150px; }
.font { width: 195px; }
.align { width: 262px; }
.number { width: 135px; }
.styles { width: 175px; }
.cells { width: 133px; }
.editing { width: 220px; }

.clipboard .big {
    width: 44px;
}

.styles .group-body, .cells .group-body {
    justify-content: space-around;
}

.editing .group-body {
    gap: 3px;
}

.editing .stack {
    width: 106px;
}

.big {
    flex-direction: column;
    justify-content: flex-start;
    padding-top: 3px;
    line-height: 13px;
}

.big > svg {
    height: 32px;
}

.big > span {
    margin-top: 2px;
}

.cells .big {
    width: 40px;
}

.big > .arrow {
    margin-top: 5px;
}

.stack {
    display: flex;
    flex-direction: column;
}

.line {
    height: 22px;
    gap: 4px;
    padding: 0 3px;
    justify-content: flex-start;
}

.rows {
    display: flex;
    flex-direction: column;
    gap: 7px;
}

.group .rows {
    padding-top: 7px;
}

.divided {
    width: 123px;
    margin-right: 4px;
    background: linear-gradient(#9fbbe0, #9fbbe0) right 4px / 1px 55px no-repeat;
}

.row {
    display: flex;
    gap: 4px;
    height: 22px;
}

.spread {
    justify-content: space-between;
}

.push {
    margin-left: auto;
}

.box {
    display: flex;
    border: 1px solid #9bb5d8;
    border-radius: 3px;
    background: linear-gradient(#dbe6f4, #cddcf0 45%, #bfd1ec 46%, #d5e4f6);
    color: #222;
}

.box button + button {
    border-left: 1px solid #b5c9e4;
}

.box button + .drop {
    width: 13px;
    border-left: 0;
}

.w22 {
    width: 22px;
}

.w20 {
    width: 20px;
}

.orient {
    width: 31px;
    gap: 2px;
}

.on {
    background: linear-gradient(#fdc884, #fba84c 45%, #fcd36a 60%, #fff0a8);
}

.serif {
    font-family: "Liberation Serif", serif;
    font-size: 15px;
}

.big-a {
    font-size: 17px;
    font-weight: bold;
}

.small-a {
    font-size: 13px;
    font-weight: bold;
}

.tip {
    align-self: flex-start;
    margin-top: 4px;
    border: 3px solid transparent;
    border-top-color: #33539b;
    border-bottom: 0;
}

.tip.up {
    border: 3px solid transparent;
    border-bottom-color: #33539b;
    border-top: 0;
}

.comma {
    padding-bottom: 6px;
    font-size: 20px;
}

.decimals {
    flex-direction: column;
    line-height: 8px;
    font-size: 9px;
}

.blue {
    font-style: normal;
    color: #2f63c8;
}

.combo {
    position: relative;
    display: flex;
    border: 1px solid #abc1de;
    background: #eaf2fb;
    color: #000;
    font-size: 12px;
}

.combo::after {
    content: "";
    position: absolute;
    right: 4px;
    top: 8px;
    border: 3px solid transparent;
    border-top: 4px solid #567db1;
    border-bottom: 0;
}

.combo select {
    width: 100%;
    padding-left: 2px;
    appearance: none;
    outline: 0;
}

.combo.family { width: 98px; }
.combo.size { width: 43px; margin-left: -5px; }
.combo.wide { width: 100%; }

/* formula bar */
.formula-bar {
    flex: none;
    display: flex;
    height: 27px;
    border-top: 2px solid #6f94c4;
    border-bottom: 3px solid #c9ddf6;
    background: #fff;
    box-shadow: inset 0 -1px 0 #6f94c4;
}

.name-box {
    display: flex;
    align-items: center;
    width: 160px;
    padding-right: 7px;
}

.name-box input {
    flex: 1;
    min-width: 0;
    text-align: center;
}

.fx {
    display: flex;
    align-items: center;
    justify-content: space-between;
    width: 84px;
    height: 21px;
    padding: 0 6px 0 5px;
    border-left: 1px solid #7f9dc6;
    border-right: 1px solid #6f94c4;
    border-radius: 11px 0 0 11px;
    background: linear-gradient(#f4f8fd, #a9c4e8);
    font: italic 15px "Liberation Serif", serif;
    color: #444;
}

.fx small {
    font-size: 11px;
}

.knob {
    width: 8px;
    height: 8px;
    border-radius: 50%;
    background: #b9c4d6;
    box-shadow: inset 1px 1px 1px #8d9bb3;
}

.formula {
    flex: 1;
    padding-left: 7px;
}

.expand {
    width: 17px;
    height: 21px;
    border-left: 1px solid #6f94c4;
    background: #cfe0f6;
}

/* sheet */
.workbook {
    flex: 1;
    display: flex;
    min-height: 0;
    padding-right: 4px;
    border-top: 1px solid #6f94c4;
    background: #b4cdf0;
}

.sheet {
    flex: 1;
    min-width: 0;
    overflow: hidden;
    background: #fff;
}

table {
    width: 1412px;
    table-layout: fixed;
    border-collapse: separate;
    border-spacing: 0;
}

.c-head { width: 37px; }
.c-a { width: 34px; }
.c-b { width: 140px; }
.c-c { width: 73px; }
.c-d { width: 56px; }
.c-e { width: 38px; }
.c-f { width: 70px; }
.c-g { width: 332px; }
.c-h { width: 221px; }
.c-i { width: 171px; }
.c-jk { width: 80px; }

th {
    padding: 0;
    border-right: 1px solid #9eb6ce;
    border-bottom: 1px solid #9eb6ce;
    font-size: 16px;
    font-weight: normal;
    color: #27413e;
}

thead th {
    height: 20px;
    line-height: 19px;
    background: linear-gradient(#f9fcfd, #d3dbe9);
}

thead .selected {
    border-color: #f29536;
    background: linear-gradient(#f9d99f, #f1c15f);
}

thead .corner {
    background: linear-gradient(145deg, #a9c4e9 62%, #e9f1fb 63%);
}

tbody th {
    height: 16px;
    line-height: 15px;
    background: #e4ecf7;
}

tbody .selected {
    border-color: #f29536;
    background: #ffd58d;
}

td {
    height: 16px;
    padding: 0 2px;
    line-height: 15px;
    white-space: nowrap;
    border-right: 1px solid #c0c0c0;
    border-bottom: 1px solid #c0c0c0;
}

.first td {
    height: 17px;
    font-size: 13px;
}

.num, .dictionary td:nth-child(5) {
    text-align: right;
}

.dictionary td:nth-child(8) {
    border-color: #a6a6a6;
}

.titles td:not(.free) {
    padding: 0;
    text-align: center;
    font-weight: bold;
}

td.free {
    border: 0;
    text-align: left;
}

td.indent {
    padding-left: 15px;
}

.red {
    color: #f00;
}

.gold {
    color: #ffc000;
}

.current {
    position: relative;
}

.current::before {
    content: "";
    position: absolute;
    inset: -2px;
    border: 2px solid #000;
}

.current::after {
    content: "";
    position: absolute;
    right: -3px;
    bottom: -3px;
    width: 5px;
    height: 5px;
    border: 1px solid #fff;
    border-width: 1px 0 0 1px;
    background: #000;
}

/* scroll bars */
.v-scroll {
    display: flex;
    flex-direction: column;
    width: 15px;
    background: linear-gradient(90deg, #9dbce2, #7398c8 40%, #86a8d4);
}

.v-scroll button {
    height: 19px;
}

.v-scroll .split {
    height: 7px;
    margin: 0 1px;
    border: 1px solid #6f94c4;
    background: #fff;
}

.v-scroll .thumb {
    height: 135px;
    border: 1px solid #55719c;
    border-radius: 2px;
    background: linear-gradient(90deg, #f2f6fb, #dbe6f3 50%, #b9cbe2 51%, #dce7f4);
}

.thumb {
    display: flex;
    align-items: center;
    justify-content: center;
}

.track {
    flex: 1;
}

.v-scroll .grip {
    width: 7px;
    height: 8px;
    background: repeating-linear-gradient(#6f86a8 0 1px, transparent 1px 2px);
}

.tri-up, .tri-down, .tri-left, .tri-right {
    border: 4px solid transparent;
}

.tri-up { border-bottom-color: #405880; border-top: 0; }
.tri-down { border-top-color: #405880; border-bottom: 0; }
.tri-left { border-right-color: #405880; border-left: 0; }
.tri-right { border-left-color: #405880; border-right: 0; }

.sheet-bar {
    flex: none;
    display: flex;
    height: 17px;
    padding-right: 20px;
    border-top: 1px solid #8fabd2;
    border-bottom: 1px solid #5f86bd;
    background: linear-gradient(#d5e5fa, #b5cfef);
}

.sheet-nav {
    display: flex;
    align-items: center;
    justify-content: space-around;
    width: 63px;
    border-right: 1px solid #8fabd2;
}

.sheet-tabs {
    flex: 1;
    display: flex;
    min-width: 0;
    padding-left: 10px;
    overflow: hidden;
    color: #15428b;
}

.sheet-tabs button {
    position: relative;
    flex: none;
    padding: 0 10px 0 11px;
    border-bottom: 1px solid #fff;
    background: linear-gradient(#d9e7fa, #bdd4f3 50%, #d7e6fa);
}

/* slanted left edge of each tab */
.sheet-tabs button::before {
    content: "";
    position: absolute;
    left: -4px;
    top: 0;
    width: 12px;
    height: 15px;
    background: linear-gradient(130deg, transparent 48%, #7d9cc9 49%, #7d9cc9 54%, #fff 55%, transparent 62%);
}

.sheet-tabs .active {
    font-weight: bold;
    background: #fff;
}

.h-scroll {
    display: flex;
    width: 176px;
    background: linear-gradient(#8dafd9, #7398c8);
}

.h-scroll .split {
    width: 6px;
    margin: 1px 0;
    border: 1px solid #6f94c4;
    background: #fff;
}

.h-scroll button {
    width: 20px;
}

.h-scroll .thumb {
    width: 102px;
    border: 1px solid #55719c;
    border-radius: 2px;
    background: linear-gradient(#f2f6fb, #dbe6f3 50%, #b9cbe2 51%, #dce7f4);
}

.h-scroll .grip {
    width: 8px;
    height: 7px;
    background: repeating-linear-gradient(90deg, #6f86a8 0 1px, transparent 1px 2px);
}

/* status bar */
.status-bar {
    flex: none;
    display: flex;
    height: 21px;
    background: linear-gradient(#dbe8fb, #c7dcf8 35%, #b0cdf3 36%, #d5e5fb);
    font-size: 11px;
    color: #15428b;
}

.state {
    width: 43px;
    padding-left: 7px;
    line-height: 20px;
    border-right: 1px solid #8fabd2;
}

.view-tools {
    display: flex;
    align-items: center;
    margin-left: auto;
    padding: 0 5px;
    border-left: 1px solid #fff;
    background: linear-gradient(#b5d0f5, #9bbeee 35%, #7ca6de 36%, #98bff0);
}

.views {
    display: flex;
    border: 1px solid #7c9fd0;
    background: #cfdff4;
}

.views button {
    width: 18px;
    height: 17px;
}

.percent {
    width: 46px;
    text-align: center;
    font-size: 12px;
}

.view-tools input {
    width: 102px;
    height: 16px;
    appearance: none;
    background: linear-gradient(#55719c, #55719c) center / 100% 1px no-repeat;
}

.view-tools input::-webkit-slider-thumb {
    appearance: none;
    width: 9px;
    height: 12px;
    border: 1px solid #45618f;
    border-radius: 1px 1px 5px 5px;
    background: #dfe8f4;
}

/* taskbar */
.taskbar {
    flex: none;
    display: flex;
    height: 30px;
    background: #060b12;
    color: #fff;
}

.taskbar > button {
    position: relative;
    width: 37px;
}

.taskbar > .open::after {
    content: "";
    position: absolute;
    left: 4px;
    bottom: 0;
    width: 28px;
    height: 2px;
    background: #76b9ed;
}

.taskbar > .many::after {
    background: linear-gradient(90deg, #76b9ed 19px, #4f83ad 19px);
}

.taskbar > .front {
    background: linear-gradient(90deg, #3a3f45 33px, #23282e 33px);
}

.taskbar > .front::after {
    left: 0;
    width: 37px;
    background: linear-gradient(90deg, #76b9ed 33px, #4f83ad 33px);
}

.tray {
    display: flex;
    align-items: center;
    margin-left: auto;
    padding-right: 24px;
    font: 12px "Open Sans", "Noto Sans", sans-serif;
    gap: 9px;
}

.tray .lang, .tray time {
    margin: 0 2px;
}

.tray button:last-child {
    margin-left: 6px;
}
```
